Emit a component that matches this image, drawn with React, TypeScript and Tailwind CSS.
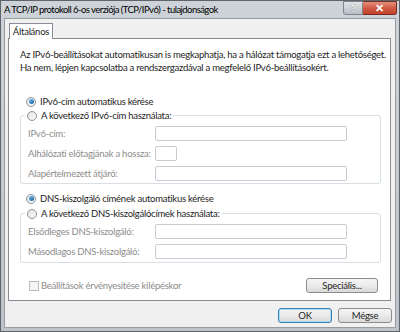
import React from "react"

const font = { fontFamily: 'Lato, "Noto Sans", sans-serif' }

const txt = "whitespace-nowrap text-[9.5px] leading-[13px] tracking-[-0.25px]"

function Radio({ checked, label }: { checked?: boolean; label: string }) {
  return (
    <span className="flex items-center gap-[4px]">
      <span className="flex h-[10px] w-[10px] items-center justify-center rounded-full border border-[#8c939b] bg-gradient-to-br from-[#e2e2e2] to-[#fbfbfb]">
        {checked && (
          <span className="h-[5px] w-[5px] rounded-full bg-gradient-to-br from-[#6cc0ee] to-[#1b5e9c]" />
        )}
      </span>
      <span className={txt + " text-[#1e1e1e]"}>{label}</span>
    </span>
  )
}

function Field({ label, small }: { label: string; small?: boolean }) {
  return (
    <div className="flex h-[15px] items-center">
      <span className={txt + " w-[127px] text-[#8d8d8d]"}>{label}</span>
      <div
        className={
          small
            ? "h-[15px] w-[22px] rounded-[2px] border border-[#c9cbcf] bg-white"
            : "h-[15px] w-[192px] rounded-[2px] border border-[#c9cbcf] bg-white"
        }
      />
    </div>
  )
}

function Button({ label, primary, width }: { label: string; primary?: boolean; width: string }) {
  return (
    <div
      className={
        "flex h-[15px] items-center justify-center rounded-[3px] border bg-gradient-to-b from-[#f4f4f4] via-[#ebebeb] to-[#d9d9d9] text-[#1e1e1e] " +
        txt +
        " " +
        width +
        (primary ? " border-[#3c7fb1] shadow-[inset_0_0_0_1px_#a6dbf6]" : " border-[#8c8c8c]")
      }
    >
      {label}
    </div>
  )
}

export default function App() {
  return (
    <div
      className="flex h-[332px] w-[400px] flex-col border border-[#5f6469] bg-gradient-to-b from-[#cdd3d9] to-[#bcc3ca]"
      style={font}
    >
      {/* title bar */}
      <div className="flex h-[17px] items-center justify-between pl-[3px] pr-[2px]">
        <span className="whitespace-nowrap text-[9.5px] leading-[14px] tracking-[-0.55px] text-black">
          A TCP/IP protokoll 6-os verziója (TCP/IPv6) - tulajdonságok
        </span>
        <div className="flex h-[14px] self-start">
          <div className="flex w-[20px] items-center justify-center rounded-bl-[3px] border border-[#7d848b] bg-gradient-to-b from-[#dfe3e7] to-[#b9c0c7] text-[10px] font-bold text-white [text-shadow:0_0_1px_#444]">
            ?
          </div>
          <div className="flex w-[34px] items-center justify-center rounded-br-[3px] border border-l-0 border-[#7a2b22] bg-gradient-to-b from-[#e2917f] via-[#cf5a44] to-[#c2402b] text-[11px] font-bold text-white">
            ✕
          </div>
        </div>
      </div>

      {/* client */}
      <div className="mx-[3px] mb-[3px] flex flex-1 flex-col border border-[#979ca1] bg-[#f0f0f0] px-[3px] pt-[4px]">
        {/* tab strip */}
        <div className="flex pl-[1px]">
          <div className={txt + " z-10 -mb-px flex h-[16px] w-[44px] items-center justify-center border border-b-0 border-[#898c95] bg-white text-[#1e1e1e]"}>
            Általános
          </div>
        </div>
        {/* tab panel */}
        <div className="flex h-[263px] w-[383px] flex-col border border-[#898c95] bg-white px-[11px] pt-[9px]">
          <p className={txt + " leading-[12px] text-[#1e1e1e]"}>
            Az IPv6-beállításokat automatikusan is megkaphatja, ha a hálózat támogatja ezt a lehetőséget.
            <br />
            Ha nem, lépjen kapcsolatba a rendszergazdával a megfelelő IPv6-beállításokért.
          </p>

          <div className="mt-[21px] pl-[6px]">
            <Radio checked label="IPv6-cím automatikus kérése" />
          </div>

          <fieldset className="mt-[1px] w-[361px] rounded-[3px] border border-[#d5dfe5] pb-[2px] pl-[7px]">
            <legend className="-ml-[3px] px-[2px]">
              <Radio label="A következő IPv6-cím használata:" />
            </legend>
            <div className="mt-[4px] flex flex-col gap-[5px]">
              <Field label="IPv6-cím:" />
              <Field label="Alhálózati előtagjának a hossza:" small />
              <Field label="Alapértelmezett átjáró:" />
            </div>
          </fieldset>

          <div className="mt-[8px] pl-[6px]">
            <Radio checked label="DNS-kiszolgáló címének automatikus kérése" />
          </div>

          <fieldset className="mt-[2px] w-[361px] rounded-[3px] border border-[#d5dfe5] pb-[3px] pl-[7px]">
            <legend className="-ml-[3px] px-[2px]">
              <Radio label="A következő DNS-kiszolgálócímek használata:" />
            </legend>
            <div className="mt-[4px] flex flex-col gap-[5px]">
              <Field label="Elsődleges DNS-kiszolgáló:" />
              <Field label="Másodlagos DNS-kiszolgáló:" />
            </div>
          </fieldset>

          <div className="mt-[15px] flex items-center justify-between pl-[9px] pr-[1px]">
            <span className="flex items-center gap-[2px]">
              <span className="h-[10px] w-[10px] border border-[#bcbcbc] bg-[#f4f4f4]" />
              <span className={txt + " text-[#8d8d8d]"}>Beállítások érvényesítése kilépéskor</span>
            </span>
            <Button label="Speciális..." width="w-[72px]" />
          </div>
        </div>

        {/* dialog buttons */}
        <div className="mt-[7px] flex justify-end gap-[6px]">
          <Button label="OK" primary width="w-[54px]" />
          <Button label="Mégse" width="w-[54px]" />
        </div>
      </div>
    </div>
  )
}
